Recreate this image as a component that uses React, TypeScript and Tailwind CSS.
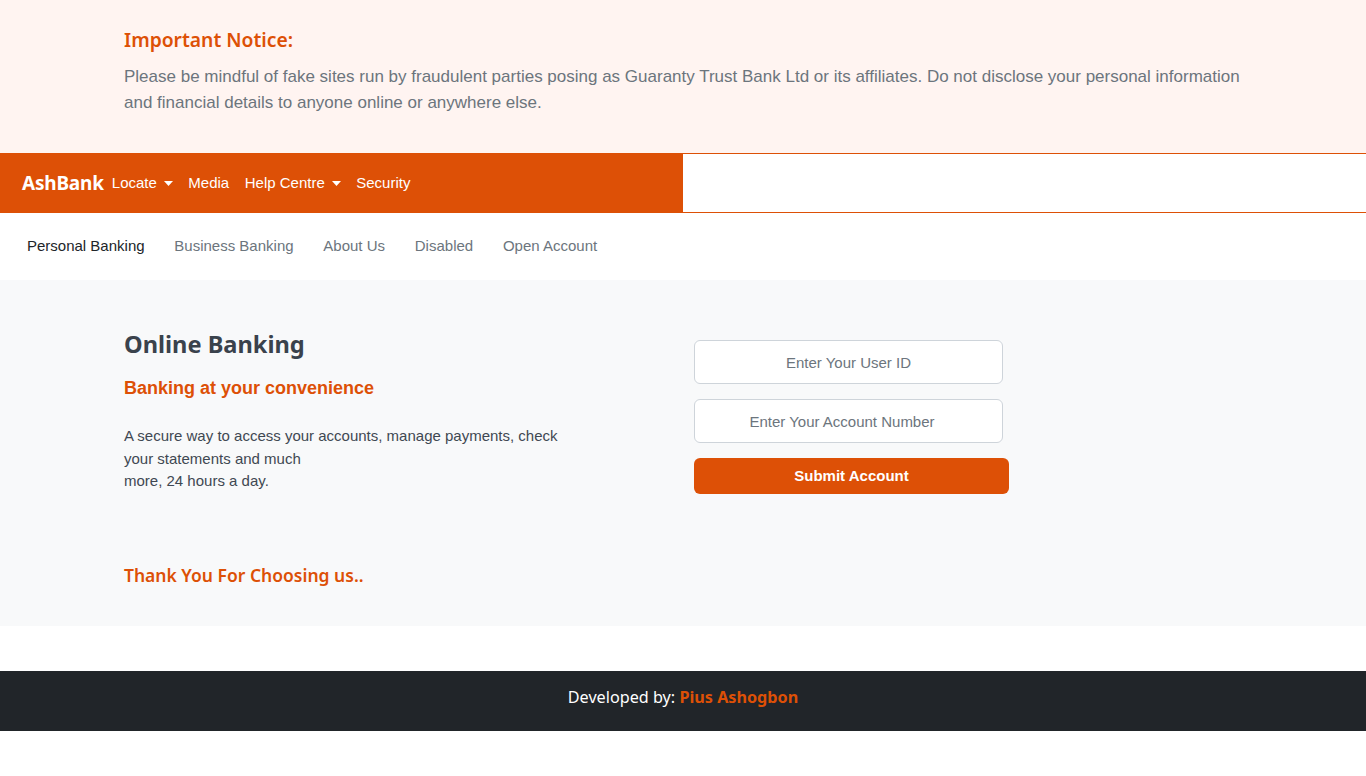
const orange = "text-[#dd5006]";

function Caret() {
  return (
    <svg className="ml-[7px] inline-block" width="9" height="5" viewBox="0 0 9 5">
      <path d="M0 0h9L4.5 5z" fill="currentColor" />
    </svg>
  );
}

export default function App() {
  return (
    <div className="min-h-[776px] bg-white font-['Liberation_Sans',Arial,sans-serif]">
      {/* notice */}
      <div className="h-[153px] bg-[#fff4f1] pt-[27px]">
        <div className="mx-auto w-[1116px]">
          <h4 className={`-ml-px font-['Noto_Sans',sans-serif] text-[19.3px] font-semibold leading-[26px] ${orange}`}>
            Important Notice:
          </h4>
          <p className="-ml-px mt-[11px] text-[17px] leading-[26px] text-[#6c757d]">
            Please be mindful of fake sites run by fraudulent parties posing as Guaranty Trust Bank Ltd or its affiliates. Do not disclose your personal information and financial details to anyone online or anywhere else.
          </p>
        </div>
      </div>

      {/* top nav */}
      <div className="flex h-[60px] border-y border-[#dd5006]">
        <nav className="flex w-[683px] items-center bg-[#dd5006] pl-[22px] text-[15px] text-white">
          <span className="mr-[8px] font-['Noto_Sans',sans-serif] text-[19px] font-bold tracking-[-0.2px]">AshBank</span>
          <div className="flex items-center gap-[15.5px]">
            <span className="flex items-center">Locate<Caret /></span>
            <span>Media</span>
            <span className="flex items-center">Help Centre<Caret /></span>
            <span>Security</span>
          </div>
        </nav>
        <div className="flex-1 bg-white" />
      </div>

      {/* second nav */}
      <div className="flex h-[67px] items-center gap-[29.75px] pl-[27px] text-[15px] text-[#6c757d]">
        <span className="text-[#212529]">Personal Banking</span>
        <span>Business Banking</span>
        <span>About Us</span>
        <span>Disabled</span>
        <span>Open Account</span>
      </div>

      {/* main */}
      <div className="h-[346px] bg-[#f8f9fa]">
        <div className="mx-auto flex w-[1116px]">
          <div className="-ml-px w-[570px] pt-[48px]">
            <h2 className="font-['Noto_Sans',sans-serif] text-[23.6px] font-bold leading-[32px] text-[#3a424c]">
              Online Banking
            </h2>
            <h4 className={`mt-[16px] text-[18px] font-bold leading-[24px] ${orange}`}>
              Banking at your convenience
            </h4>
            <p className="mt-[25px] text-[15px] leading-[22.5px] text-[#3f4852]">
              A secure way to access your accounts, manage payments, check
              <br />
              your statements and much
              <br />
              more, 24 hours a day.
            </p>
            <h4 className={`mt-[69px] font-['Noto_Sans',sans-serif] text-[17.5px] font-semibold leading-[26px] ${orange}`}>
              Thank You For Choosing us..
            </h4>
          </div>
          <div className="flex flex-col pt-[60px]">
            <input
              placeholder="Enter Your User ID"
              className="h-[44px] w-[309px] rounded-[6px] border border-[#ced4da] bg-white text-center text-[15px] text-[#212529] outline-none placeholder:text-[#6c757d]"
            />
            <input
              placeholder="Enter Your Account Number"
              className="mt-[15px] h-[44px] w-[309px] rounded-[6px] border border-[#ced4da] bg-white pr-[13px] text-center text-[15px] text-[#212529] outline-none placeholder:text-[#6c757d]"
            />
            <button className="mt-[15px] h-[36px] w-[315px] rounded-[6px] bg-[#dd5006] text-[15px] font-bold text-white">
              Submit Account
            </button>
          </div>
        </div>
      </div>

      {/* footer */}
      <footer className="mt-[45px] flex h-[60px] items-center justify-center bg-[#212529] pb-[8px] font-['Noto_Sans',sans-serif] text-[16.2px] text-white">
        Developed by:&nbsp;<span className={`font-bold ${orange}`}>Pius Ashogbon</span>
      </footer>
    </div>
  );
}
